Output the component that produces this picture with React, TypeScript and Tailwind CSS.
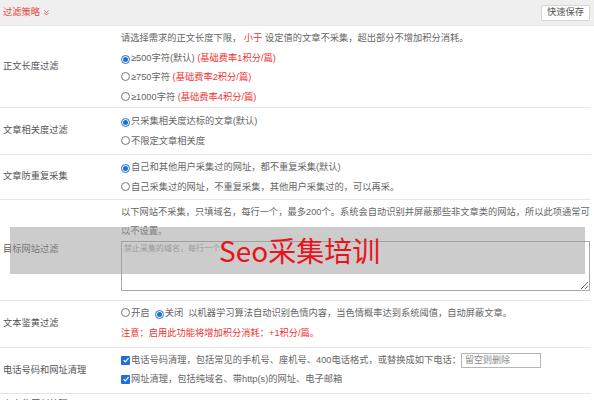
import React from "react";

const font = { fontFamily: '"Liberation Sans", "Noto Sans CJK SC", sans-serif' };

function Radio({ checked }: { checked?: boolean }) {
    return checked ? (
        <span className="inline-flex w-[9px] h-[9px] rounded-full border border-[#1e6fd9] bg-white items-center justify-center align-[-1px] mr-[1px]">
            <span className="w-[5px] h-[5px] rounded-full bg-[#1e6fd9]" />
        </span>
    ) : (
        <span className="inline-block w-[9px] h-[9px] rounded-full border border-[#777] bg-white align-[-1px] mr-[1px]" />
    );
}

function Check() {
    return (
        <span className="inline-flex w-[9px] h-[9px] rounded-[1px] bg-[#1e6fd9] items-center justify-center align-[-1px] mr-[1px]">
            <svg viewBox="0 0 10 10" className="w-[8px] h-[8px]">
                <path d="M2 5.2 L4.2 7.3 L8.2 2.6" fill="none" stroke="#fff" strokeWidth="1.6" />
            </svg>
        </span>
    );
}

function Row({ label, children }: { label: string; children: React.ReactNode }) {
    return (
        <div className="flex border-b border-[#e6e6e6]">
            <div className="w-[121px] shrink-0 flex items-center pl-[3px] text-[#555]">{label}</div>
            <div className="flex-1 min-w-0">{children}</div>
        </div>
    );
}

const Red = ({ children }: { children: React.ReactNode }) => <span className="text-[#f03434]">{children}</span>;

export default function App() {
    return (
        <div className="relative w-[594px] h-[400px] overflow-hidden bg-white text-[9.25px] text-[#666]" style={font}>
            {/* Header */}
            <div className="h-[26px] bg-[#efefef] flex items-center justify-between pl-[3px] pr-[4px] border-b border-[#e4e4e4]">
                <div className="flex items-center gap-[3px] text-[#e8403c]">
                    <span>过滤策略</span>
                    <svg viewBox="0 0 8 8" className="w-[7px] h-[7px]">
                        <path d="M1.5 1.5 L4 4 L6.5 1.5 M1.5 4.2 L4 6.7 L6.5 4.2" fill="none" stroke="#e8403c" strokeWidth="0.9" />
                    </svg>
                </div>
                <button className="h-[16px] px-[5px] bg-white border border-[#d4d4d4] rounded-[2px] text-[#555] leading-none">
                    快速保存
                </button>
            </div>

            <div className="mr-[3px]">
                <Row label="正文长度过滤">
                    <div className="pt-[3px] leading-[19.5px]">
                        <div>
                            请选择需求的正文长度下限， <Red>小于</Red> 设定值的文章不采集，超出部分不增加积分消耗。
                        </div>
                        <div>
                            <Radio checked />≥500字符(默认) <Red>(基础费率1积分/篇)</Red>
                        </div>
                        <div>
                            <Radio />≥750字符 <Red>(基础费率2积分/篇)</Red>
                        </div>
                        <div>
                            <Radio />≥1000字符 <Red>(基础费率4积分/篇)</Red>
                        </div>
                    </div>
                </Row>

                <Row label="文章相关度过滤">
                    <div className="py-[3px] leading-[20px]">
                        <div>
                            <Radio checked />只采集相关度达标的文章(默认)
                        </div>
                        <div>
                            <Radio />不限定文章相关度
                        </div>
                    </div>
                </Row>

                <Row label="文章防重复采集">
                    <div className="pt-[3px] pb-[2px] leading-[19.5px]">
                        <div>
                            <Radio checked />自己和其他用户采集过的网址，都不重复采集(默认)
                        </div>
                        <div>
                            <Radio />自己采集过的网址，不重复采集，其他用户采集过的，可以再采。
                        </div>
                    </div>
                </Row>

                <Row label="目标网站过滤">
                    <div className="pt-[3px] pb-[9px] pr-[1px]">
                        <div className="leading-[19px]">
                            以下网站不采集，只填域名，每行一个，最多200个。系统会自动识别并屏蔽那些非文章类的网站，所以此项通常可
                            <br />
                            以不设置。
                        </div>
                        <textarea
                            className="block w-full h-[50px] border border-[#a9a9a9] bg-transparent px-[2px] py-[1px] text-[8px] leading-[12px] text-[#666] resize-y placeholder:text-[#999] outline-none"
                            style={font}
                            placeholder="禁止采集的域名，每行一个"
                        />
                    </div>
                </Row>

                <Row label="文本鉴黄过滤">
                    <div className="pt-[3px] pb-[4px] leading-[19.5px]">
                        <div>
                            <Radio />开启 &nbsp;<Radio checked />关闭 &nbsp;以机器学习算法自动识别色情内容，当色情概率达到系统阈值，自动屏蔽文章。
                        </div>
                        <div>
                            <Red>注意：启用此功能将增加积分消耗：+1积分/篇。</Red>
                        </div>
                    </div>
                </Row>

                <Row label="电话号码和网址清理">
                    <div className="pt-[2px] pb-[4px] leading-[19px]">
                        <div className="flex items-center h-[20px]">
                            <Check />
                            <span>电话号码清理，包括常见的手机号、座机号、400电话格式，或替换成如下电话：</span>
                            <input
                                className="w-[80px] h-[15px] border border-[#b5b5b5] px-[3px] text-[9px] text-[#666] placeholder:text-[#888] outline-none"
                                style={font}
                                placeholder="留空则删除"
                            />
                        </div>
                        <div>
                            <Check />网址清理，包括纯域名、带http(s)的网址、电子邮箱
                        </div>
                    </div>
                </Row>

                <Row label="文章伪原创处理">
                    <div className="pt-[2px] leading-[19.5px]">
                        <div>
                            <Radio />开启 &nbsp;<Radio checked />关闭 &nbsp;<Red>启用后将增加积分消耗：+1积分/篇</Red>
                        </div>
                    </div>
                </Row>
            </div>

            {/* Watermark band */}
            <div className="absolute left-[10px] top-[227px] w-[575px] h-[47px] bg-[#9a9a9a]/50 pointer-events-none" />
            <div className="absolute left-[219px] top-[233px] text-[28px] leading-[34px] text-[#e8141c] pointer-events-none" style={{ fontFamily: '"Noto Sans CJK SC", "Noto Sans", sans-serif' }}>
                Seo采集培训
            </div>
        </div>
    );
}
